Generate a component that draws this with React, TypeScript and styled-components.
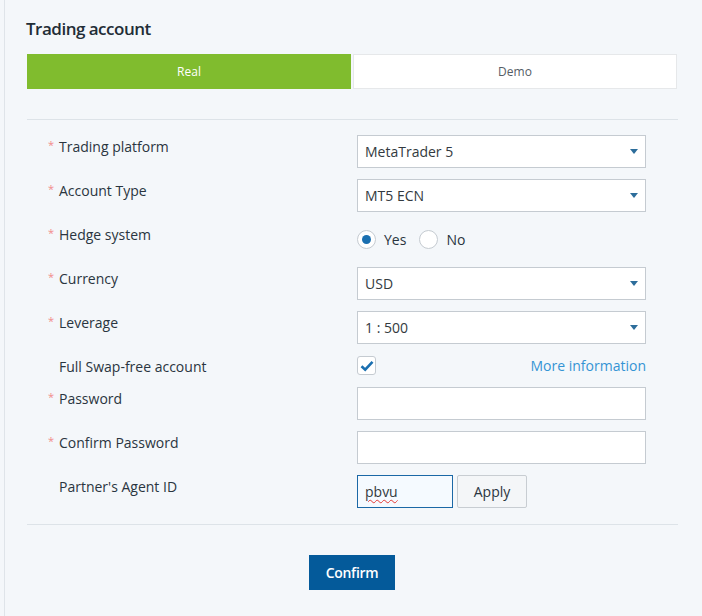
import React from 'react'
import styled, { createGlobalStyle } from 'styled-components'

const GlobalStyle = createGlobalStyle`
  html, body {
    margin: 0;
    padding: 0;
    background: #f4f7fa;
  }
  body {
    font-family: 'Open Sans', 'Noto Sans', sans-serif;
    color: #2a3540;
  }
  * {
    box-sizing: border-box;
  }
`

const Page = styled.div`
  margin-left: 4px;
  min-height: 616px;
  border-left: 1px solid #dfe4e9;
  padding: 15px 24px 26px 22px;
`

const Title = styled.h2`
  margin: 0 0 11px -1px;
  font-size: 17px;
  line-height: 28px;
  font-weight: 600;
  color: #222d36;
  letter-spacing: -0.5px;
`

const Tabs = styled.div`
  display: grid;
  grid-template-columns: 1fr 1fr;
  gap: 2px;
  margin-right: 1px;
`

const Tab = styled.div<{ $active?: boolean }>`
  height: 35px;
  display: flex;
  align-items: center;
  justify-content: center;
  font-size: 12px;
  background: ${(p) => (p.$active ? '#80bc2e' : '#fff')};
  color: ${(p) => (p.$active ? '#fff' : '#555d66')};
  border: 1px solid ${(p) => (p.$active ? '#80bc2e' : '#e6e8ea')};
`

const Divider = styled.hr<{ $top: number }>`
  margin: ${(p) => p.$top}px 0 0;
  border: 0;
  border-top: 1px solid #dde3e8;
`

const Form = styled.div`
  padding: 15px 32px 0 21px;
`

const Row = styled.div<{ $compact?: boolean }>`
  display: grid;
  grid-template-columns: 309px 1fr;
  align-items: start;
  height: ${(p) => (p.$compact ? 21 : 33)}px;
  margin-bottom: 11px;
  &:last-child {
    margin-bottom: 0;
  }
`

const Label = styled.div`
  position: relative;
  padding: 2px 0 0 11px;
  font-size: 14px;
  line-height: 19px;
  color: #2a3540;
`

const Star = styled.span`
  position: absolute;
  left: 0;
  top: 0;
  font-size: 11px;
  color: #f28b8b;
`

const SelectBox = styled.div`
  height: 33px;
  display: flex;
  align-items: center;
  justify-content: space-between;
  padding: 0 6px 0 7px;
  background: #fff;
  border: 1px solid #c5cbd1;
  font-size: 14px;
  color: #333a40;
`

const Caret = styled.span`
  width: 0;
  height: 0;
  border-left: 4px solid transparent;
  border-right: 4px solid transparent;
  border-top: 5px solid #2c6d9b;
  margin-right: 1px;
`

const TextInput = styled.div<{ $focused?: boolean; $width?: number }>`
  height: 33px;
  width: ${(p) => (p.$width ? `${p.$width}px` : '100%')};
  display: flex;
  align-items: center;
  padding: 0 7px;
  background: ${(p) => (p.$focused ? '#f5faff' : '#fff')};
  border: 1px solid ${(p) => (p.$focused ? '#1b68a6' : '#c5cbd1')};
  font-size: 14px;
  color: #333a40;
`

const Misspelled = styled.span`
  text-decoration: underline wavy #e53935;
  text-decoration-thickness: 1px;
  text-underline-offset: 2px;
`

const Inline = styled.div<{ $between?: boolean }>`
  display: flex;
  align-items: center;
  gap: 4px;
  justify-content: ${(p) => (p.$between ? 'space-between' : 'flex-start')};
  min-height: 21px;
`

const RadioGroup = styled.div`
  display: flex;
  align-items: center;
  height: 33px;
  font-size: 14px;
  color: #2a3540;
`

const RadioItem = styled.label`
  display: flex;
  align-items: center;
  gap: 8px;
  margin-right: 13px;
`

const RadioDot = styled.span<{ $checked?: boolean }>`
  width: 19px;
  height: 19px;
  border-radius: 50%;
  background: #fff;
  border: 1px solid #c5cbd1;
  display: flex;
  align-items: center;
  justify-content: center;
  &::after {
    content: '';
    width: 9px;
    height: 9px;
    border-radius: 50%;
    background: ${(p) => (p.$checked ? '#1a6fb0' : 'transparent')};
  }
`

const CheckBox = styled.span`
  width: 19px;
  height: 19px;
  border-radius: 3px;
  background: #fff;
  border: 1.5px solid #c5cbd1;
  display: flex;
  align-items: center;
  justify-content: center;
`

const MoreLink = styled.a`
  font-size: 14px;
  color: #3494d4;
  text-decoration: none;
`

const ApplyButton = styled.button`
  height: 33px;
  width: 70px;
  background: #f4f6f8;
  border: 1px solid #c8cdd2;
  border-radius: 2px;
  font-family: inherit;
  font-size: 14px;
  color: #2a3540;
`

const Footer = styled.div`
  display: flex;
  justify-content: center;
  padding-top: 30px;
  padding-right: 1px;
`

const ConfirmButton = styled.button`
  width: 86px;
  height: 35px;
  background: #045a9a;
  border: 0;
  color: #fff;
  font-family: inherit;
  font-size: 14px;
  font-weight: 600;
  letter-spacing: -0.3px;
`

const Field: React.FC<{ label: string; required?: boolean; compact?: boolean; children: React.ReactNode }> = ({
  label,
  required,
  compact,
  children,
}) => (
  <Row $compact={compact}>
    <Label>
      {required && <Star>*</Star>}
      {label}
    </Label>
    {children}
  </Row>
)

const Select: React.FC<{ value: string }> = ({ value }) => (
  <SelectBox>
    <span>{value}</span>
    <Caret />
  </SelectBox>
)

const App: React.FC = () => (
  <>
    <GlobalStyle />
    <Page>
      <Title>Trading account</Title>
      <Tabs>
        <Tab $active>Real</Tab>
        <Tab>Demo</Tab>
      </Tabs>
      <Divider $top={30} />
      <Form>
        <Field label="Trading platform" required>
          <Select value="MetaTrader 5" />
        </Field>
        <Field label="Account Type" required>
          <Select value="MT5 ECN" />
        </Field>
        <Field label="Hedge system" required>
          <RadioGroup>
            <RadioItem>
              <RadioDot $checked />
              Yes
            </RadioItem>
            <RadioItem>
              <RadioDot />
              No
            </RadioItem>
          </RadioGroup>
        </Field>
        <Field label="Currency" required>
          <Select value="USD" />
        </Field>
        <Field label="Leverage" required>
          <Select value="1 : 500" />
        </Field>
        <Field label="Full Swap-free account" compact>
          <Inline $between>
            <CheckBox>
              <svg width="14" height="12" viewBox="0 0 14 12">
                <path d="M1.5 6.2 L5.2 9.6 L12.5 1.8" fill="none" stroke="#1a6fb0" strokeWidth="2.6" />
              </svg>
            </CheckBox>
            <MoreLink href="#">More information</MoreLink>
          </Inline>
        </Field>
        <Field label="Password" required>
          <TextInput />
        </Field>
        <Field label="Confirm Password" required>
          <TextInput />
        </Field>
        <Field label="Partner's Agent ID">
          <Inline>
            <TextInput $focused $width={96}>
              <Misspelled>pbvu</Misspelled>
            </TextInput>
            <ApplyButton>Apply</ApplyButton>
          </Inline>
        </Field>
      </Form>
      <Divider $top={16} />
      <Footer>
        <ConfirmButton>Confirm</ConfirmButton>
      </Footer>
    </Page>
  </>
)

export default App
